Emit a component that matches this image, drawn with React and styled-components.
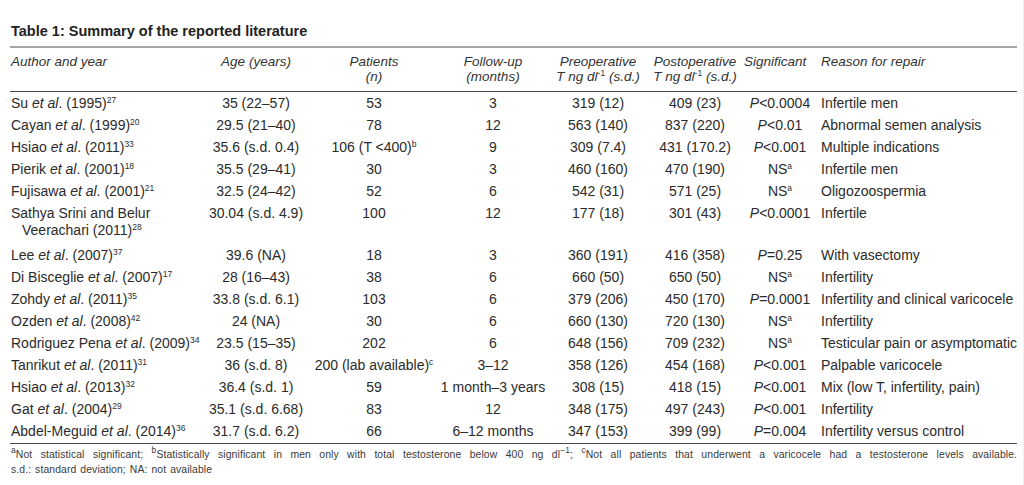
import styled, { createGlobalStyle } from "styled-components";

const GlobalStyle = createGlobalStyle`
  html, body {
    margin: 0;
    padding: 0;
    background: #ffffff;
  }
  body {
    font-family: "Liberation Sans", Arial, sans-serif;
    color: #2b2b2b;
  }
`;

const COLS = "189px 112px 124px 114px 96px 98px 72px 1fr";

const rows = [
  { author: "Su", year: "(1995)", ref: "27", age: "35 (22–57)", pts: "53", fu: "3", pre: "319 (12)", post: "409 (23)", sig: ["P", "<0.0004"], reason: "Infertile men" },
  { author: "Cayan", year: "(1999)", ref: "20", age: "29.5 (21–40)", pts: "78", fu: "12", pre: "563 (140)", post: "837 (220)", sig: ["P", "<0.01"], reason: "Abnormal semen analysis" },
  { author: "Hsiao", year: "(2011)", ref: "33", age: "35.6 (s.d. 0.4)", pts: "106 (T <400)", ptsSup: "b", fu: "9", pre: "309 (7.4)", post: "431 (170.2)", sig: ["P", "<0.001"], reason: "Multiple indications" },
  { author: "Pierik", year: "(2001)", ref: "18", age: "35.5 (29–41)", pts: "30", fu: "3", pre: "460 (160)", post: "470 (190)", ns: true, reason: "Infertile men" },
  { author: "Fujisawa", year: "(2001)", ref: "21", age: "32.5 (24–42)", pts: "52", fu: "6", pre: "542 (31)", post: "571 (25)", ns: true, reason: "Oligozoospermia" },
  { plain: ["Sathya Srini and Belur", "Veerachari (2011)"], ref: "28", age: "30.04 (s.d. 4.9)", pts: "100", fu: "12", pre: "177 (18)", post: "301 (43)", sig: ["P", "<0.0001"], reason: "Infertile" },
  { author: "Lee", year: "(2007)", ref: "37", age: "39.6 (NA)", pts: "18", fu: "3", pre: "360 (191)", post: "416 (358)", sig: ["P", "=0.25"], reason: "With vasectomy" },
  { author: "Di Bisceglie", year: "(2007)", ref: "17", age: "28 (16–43)", pts: "38", fu: "6", pre: "660 (50)", post: "650 (50)", ns: true, reason: "Infertility" },
  { author: "Zohdy", year: "(2011)", ref: "35", age: "33.8 (s.d. 6.1)", pts: "103", fu: "6", pre: "379 (206)", post: "450 (170)", sig: ["P", "=0.0001"], reason: "Infertility and clinical varicocele" },
  { author: "Ozden", year: "(2008)", ref: "42", age: "24 (NA)", pts: "30", fu: "6", pre: "660 (130)", post: "720 (130)", ns: true, reason: "Infertility" },
  { author: "Rodriguez Pena", year: "(2009)", ref: "34", age: "23.5 (15–35)", pts: "202", fu: "6", pre: "648 (156)", post: "709 (232)", ns: true, reason: "Testicular pain or asymptomatic" },
  { author: "Tanrikut", year: "(2011)", ref: "31", age: "36 (s.d. 8)", pts: "200 (lab available)", ptsSup: "c", fu: "3–12", pre: "358 (126)", post: "454 (168)", sig: ["P", "<0.001"], reason: "Palpable varicocele" },
  { author: "Hsiao", year: "(2013)", ref: "32", age: "36.4 (s.d. 1)", pts: "59", fu: "1 month–3 years", pre: "308 (15)", post: "418 (15)", sig: ["P", "<0.001"], reason: "Mix (low T, infertility, pain)" },
  { author: "Gat", year: "(2004)", ref: "29", age: "35.1 (s.d. 6.68)", pts: "83", fu: "12", pre: "348 (175)", post: "497 (243)", sig: ["P", "<0.001"], reason: "Infertility" },
  { author: "Abdel-Meguid", year: "(2014)", ref: "36", age: "31.7 (s.d. 6.2)", pts: "66", fu: "6–12 months", pre: "347 (153)", post: "399 (99)", sig: ["P", "=0.004"], reason: "Infertility versus control" },
];

export default function App() {
  return (
    <>
      <GlobalStyle />
      <Page>
        <Sheet>
          <Title>Table 1: Summary of the reported literature</Title>
          <HeadRow>
            <HeadCell>Author and year</HeadCell>
            <HeadCell $center>Age (years)</HeadCell>
            <HeadCell $center>
              Patients
              <br />
              (n)
            </HeadCell>
            <HeadCell $center>
              Follow-up
              <br />
              (months)
            </HeadCell>
            <HeadCell $center>
              Preoperative
              <br />
              T ng dl<Sup>-1</Sup> (s.d.)
            </HeadCell>
            <HeadCell $center>
              Postoperative
              <br />
              T ng dl<Sup>-1</Sup> (s.d.)
            </HeadCell>
            <HeadCell>Significant</HeadCell>
            <HeadCell $reason>Reason for repair</HeadCell>
          </HeadRow>
          <Body>
            {rows.map((r, i) => (
              <Row key={i} $tall={!!r.plain}>
                <AuthorCell $wrapped={!!r.plain}>
                  {r.plain ? (
                    <>
                      {r.plain[0]}
                      <br />
                      {r.plain[1]}
                      <Sup>{r.ref}</Sup>
                    </>
                  ) : (
                    <>
                      {r.author} <i>et al</i>. {r.year}
                      <Sup>{r.ref}</Sup>
                    </>
                  )}
                </AuthorCell>
                <Cell $center>{r.age}</Cell>
                <Cell $center>
                  {r.pts}
                  {r.ptsSup && <Sup>{r.ptsSup}</Sup>}
                </Cell>
                <Cell $center>{r.fu}</Cell>
                <Cell $center>{r.pre}</Cell>
                <Cell $center>{r.post}</Cell>
                <Cell $center>
                  {r.ns ? (
                    <>
                      NS<Sup>a</Sup>
                    </>
                  ) : (
                    <>
                      <i>{r.sig[0]}</i>
                      {r.sig[1]}
                    </>
                  )}
                </Cell>
                <Cell $reason>{r.reason}</Cell>
              </Row>
            ))}
          </Body>
          <Notes>
            <NoteLine $full>
              <Sup>a</Sup>Not statistical significant; <Sup>b</Sup>Statistically significant in men only with
              total testosterone below 400 ng dl<Sup>−1</Sup>; <Sup>c</Sup>Not all patients that underwent a
              varicocele had a testosterone levels available.
            </NoteLine>
            <NoteLine>s.d.: standard deviation; NA: not available</NoteLine>
          </Notes>
        </Sheet>
        <Edge />
      </Page>
    </>
  );
}

const Page = styled.div`
  display: flex;
  width: 1024px;
  height: 485px;
  background: #ffffff;
`;

const Sheet = styled.div`
  flex: 1;
  padding: 22px 6px 0 10px;
`;

const Edge = styled.div`
  width: 6px;
  background: #f1f1f1;
`;

const Title = styled.div`
  font-weight: bold;
  font-size: 14.5px;
  line-height: 18px;
  color: #222;
  padding-left: 1px;
  padding-bottom: 6px;
  border-bottom: 2px solid #a6a6a6;
`;

const HeadRow = styled.div`
  display: grid;
  grid-template-columns: ${COLS};
  padding: 6px 0 7px 1px;
  border-bottom: 1px solid #4a4a4a;
`;

const HeadCell = styled.div`
  font-style: italic;
  font-size: 13.5px;
  line-height: 15px;
  color: #333;
  text-align: ${(p) => (p.$center ? "center" : "left")};
  padding-left: ${(p) => (p.$reason ? "5px" : "0")};
  white-space: nowrap;
`;

const Body = styled.div`
  padding: 0 0 1px 1px;
  border-bottom: 1px solid #4a4a4a;
`;

const Row = styled.div`
  display: grid;
  grid-template-columns: ${COLS};
  padding: 3px 0 ${(p) => (p.$tall ? "5px" : "3px")};
`;

const Cell = styled.div`
  font-size: 14px;
  line-height: 16px;
  text-align: ${(p) => (p.$center ? "center" : "left")};
  padding-left: ${(p) => (p.$reason ? "5px" : "0")};
  white-space: nowrap;
`;

const AuthorCell = styled(Cell)`
  padding-left: 11px;
  text-indent: -11px;
  line-height: ${(p) => (p.$wrapped ? "17px" : "16px")};
`;

const Sup = styled.sup`
  font-size: 8.5px;
  line-height: 0;
  vertical-align: 5px;
  font-style: normal;
`;

const Notes = styled.div`
  padding: 3px 0 0 1px;
`;

const NoteLine = styled.div`
  font-size: 10.4px;
  line-height: 15px;
  color: #3a3a3a;
  text-align: justify;
  text-align-last: ${(p) => (p.$full ? "justify" : "left")};
  word-spacing: ${(p) => (p.$full ? "0" : "1px")};
  letter-spacing: 0.1px;
`;
